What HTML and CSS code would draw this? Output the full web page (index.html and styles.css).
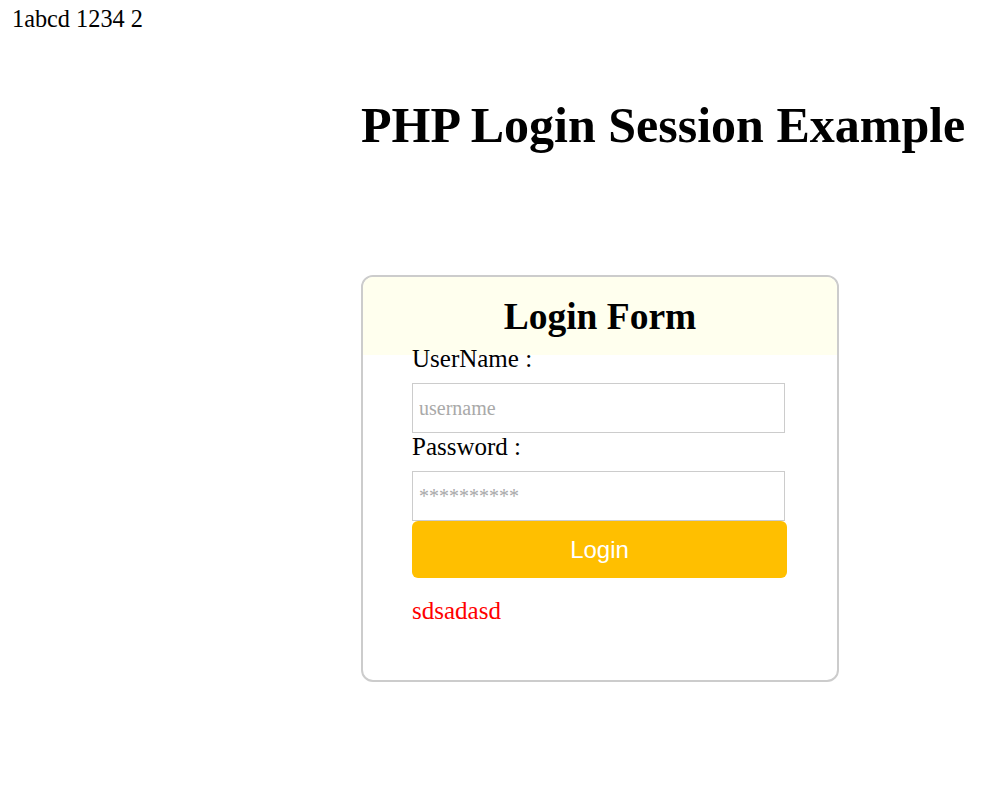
FILE: index.html
```html
<!DOCTYPE html>
<html>
<head>
<meta charset="utf-8">
<title>PHP Login Session Example</title>
<link rel="stylesheet" href="styles.css">
</head>
<body>
<div class="topline">1abcd 1234 2</div>
<div class="page">
  <h1 class="title">PHP Login Session Example</h1>
  <div class="card">
    <div class="card-head"><h2 class="card-title">Login Form</h2></div>
    <form class="form">
      <label class="label" for="u">UserName :</label>
      <input class="field" id="u" type="text" placeholder="username">
      <label class="label" for="p">Password :</label>
      <input class="field" id="p" type="password" placeholder="**********">
      <button class="btn" type="button">Login</button>
      <div class="error">sdsadasd</div>
    </form>
  </div>
</div>
</body>
</html>
```
FILE: styles.css
```css
html, body {
  margin: 0;
  padding: 0;
  background: #fff;
}
body {
  font-family: "Liberation Serif", "Times New Roman", serif;
  font-size: 24px;
  line-height: 1.107;
  color: #000;
}
.topline {
  padding: 6px 0 0 12px;
  font-size: 24.3px;
}
.page {
  padding-left: 361px;
}
.title {
  margin: 65px 0 0 0;
  font-size: 50px;
  font-weight: bold;
  line-height: 55.35px;
  white-space: nowrap;
}
.card {
  margin-top: 122px;
  width: 478px;
  height: 407px;
  box-sizing: border-box;
  border: 2px solid #cccccc;
  border-radius: 12px;
  overflow: hidden;
}
.card-head {
  background: #ffffee;
  padding: 19px 0 18px;
  margin-bottom: -10px;
  text-align: center;
}
.card-title {
  margin: 0;
  font-size: 37.5px;
  font-weight: bold;
  line-height: 41px;
}
.form {
  padding: 0 0 0 49px;
}
.label {
  display: block;
  position: relative;
  font-size: 25px;
  line-height: 27px;
}
.field {
  display: block;
  margin: 11px 0 0 0;
  width: 373px;
  height: 50px;
  box-sizing: border-box;
  border: 1px solid #cccccc;
  border-radius: 0;
  padding: 0 6px;
  font-family: "Liberation Serif", "Times New Roman", serif;
  font-size: 20px;
  outline: none;
}
.field::placeholder {
  color: #a9a9a9;
}
.btn {
  display: block;
  width: 375px;
  height: 57px;
  margin: 0;
  border: none;
  border-radius: 6px;
  background: #ffbf00;
  color: #fff;
  font-family: "Liberation Sans", Arial, sans-serif;
  font-size: 24px;
  padding: 0;
}
.error {
  margin-top: 20px;
  color: #ff0000;
  font-size: 25px;
  line-height: 26.6px;
}
```
